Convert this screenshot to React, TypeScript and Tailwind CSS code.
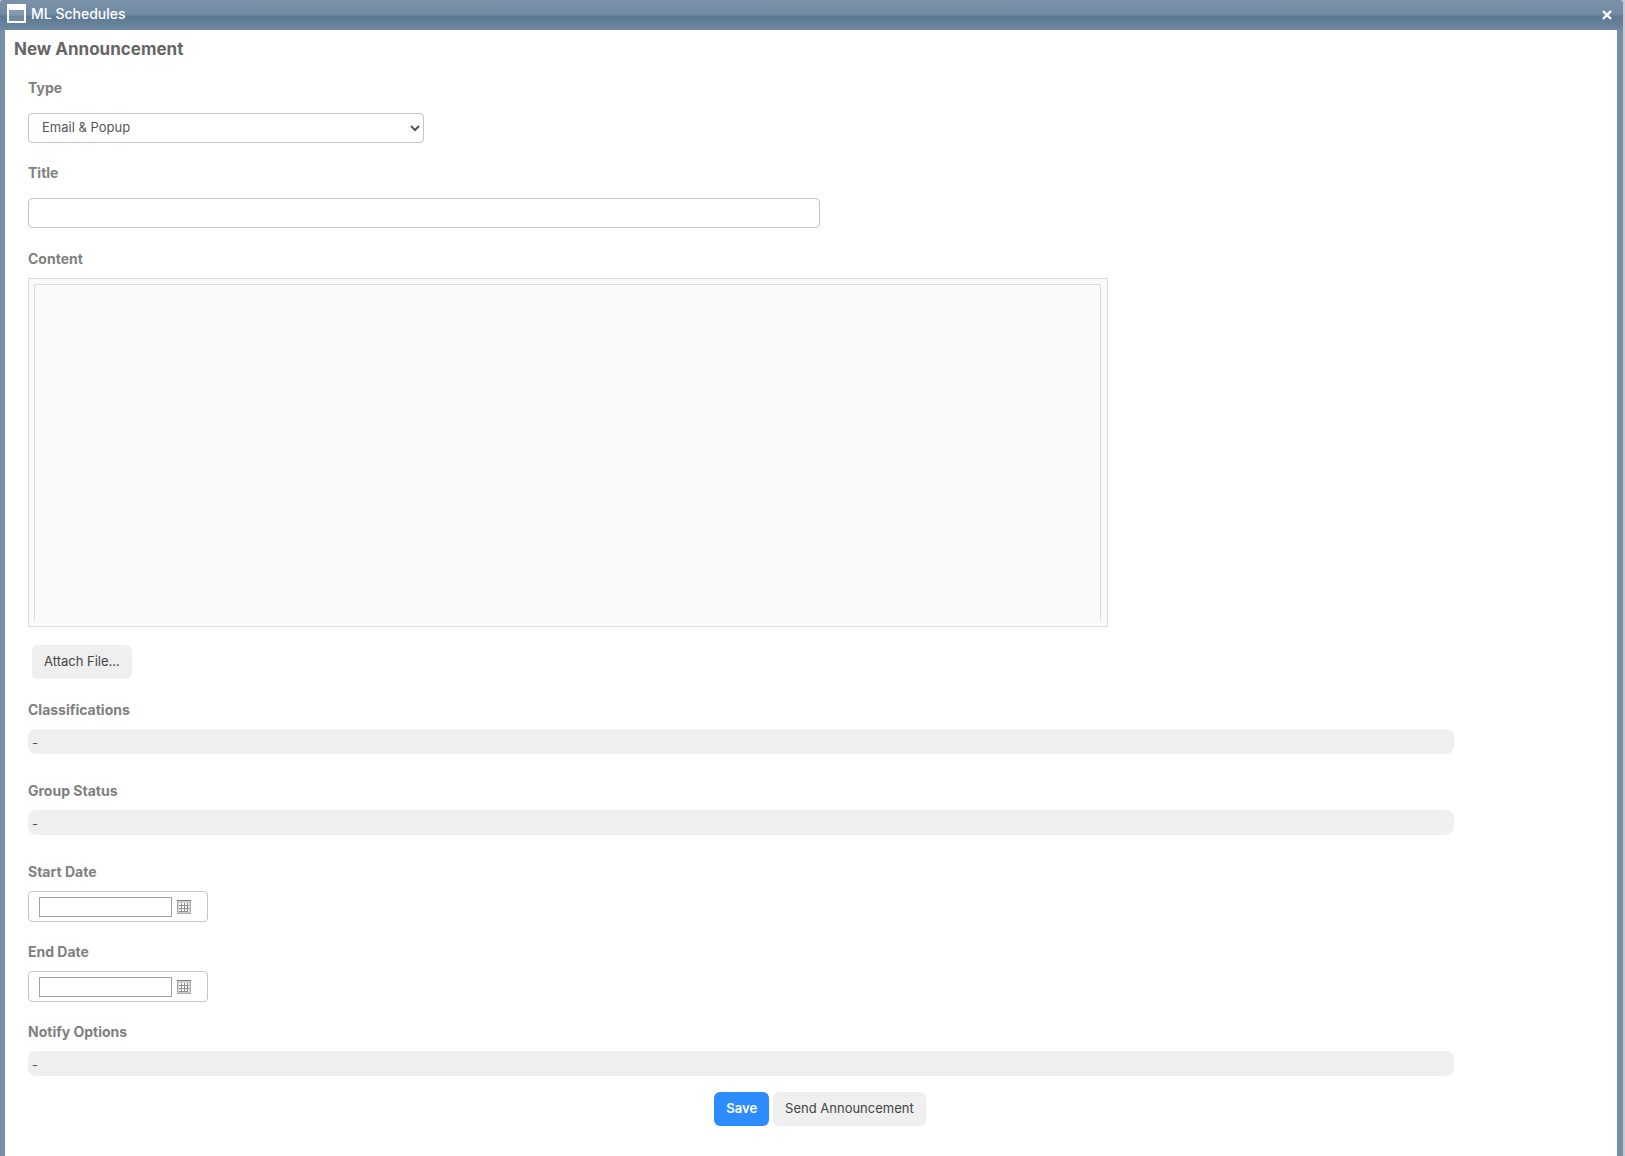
import React from "react";

function WindowIcon() {
  return (
    <svg width="19" height="19" viewBox="0 0 19 19" aria-hidden="true">
      <path fill="#fff" fillRule="evenodd" d="M0 0h19v19H0zM2 6h15v11H2z" />
      <path fill="#fff" fillOpacity="0.12" d="M2 6h15v11H2z" />
    </svg>
  );
}

function CloseIcon() {
  return (
    <svg width="10" height="10" viewBox="0 0 10 10" aria-hidden="true">
      <path d="M1 1l8 8M9 1l-8 8" stroke="#fff" strokeWidth="2.4" />
    </svg>
  );
}

function CalendarIcon() {
  return (
    <svg width="14" height="14" viewBox="0 0 14 14" aria-hidden="true">
      <path fill="#cfcfcf" d="M0 0h14v14H0z" />
      <path fill="#7d7d7d" d="M0 0h14v1H0z" />
      <path fill="#adadad" d="M0 1h1v13H0zM13 1h1v13h-1zM0 13h14v1H0z" />
      <path fill="#fff" d="M2 3h10v9H2z" />
      <path fill="#8f8f8f" d="M4 3h1v9H4zM7 3h1v9H7zM10 3h1v9h-1zM2 5h10v1H2zM2 8h10v1H2zM2 11h8v1H2z" />
    </svg>
  );
}

const labelClass = "block pt-px text-[14px] leading-5 font-bold text-[#808080]";

function Picker({ id, label }: { id: string; label: string }) {
  return (
    <div>
      <span id={id} className={labelClass}>{label}</span>
      <button
        type="button"
        aria-labelledby={id}
        className="mt-[9px] flex h-[25px] w-[90%] items-center rounded-lg bg-[#efefef] px-1 pt-1 text-left text-[13px] text-[#555]"
      >
        -
      </button>
    </div>
  );
}

function DateField({ id, label }: { id: string; label: string }) {
  return (
    <div>
      <label htmlFor={id} className={labelClass}>{label}</label>
      <div className="mt-[9px] flex h-[31px] w-[180px] items-center gap-[5px] rounded border border-[#c4c4c4] pt-px pl-2.5">
        <input id={id} type="text" className="h-5 w-[133px] border border-[#a0a0a0] px-1 text-[13px] outline-none" />
        <button type="button" aria-label={`Pick ${label}`}>
          <CalendarIcon />
        </button>
      </div>
    </div>
  );
}

export default function App() {
  return (
    <div className="min-h-screen bg-[#cdc7cd] pr-0.5 font-['Inter',sans-serif]">
      <div className="flex min-h-screen flex-col rounded-t bg-[#7590a7]">
        <header className="flex h-[30px] items-center justify-between rounded-t bg-[linear-gradient(to_bottom,#7a91a9_0px,#6f8ba3_15px,#5b7991_16px,#6d88a0_30px)] pr-[11px] pb-[3px] pl-[7px]">
          <div className="flex items-center gap-[5px]">
            <WindowIcon />
            <h1 className="text-[14px] leading-5 font-medium text-white">ML Schedules</h1>
          </div>
          <button type="button" aria-label="Close" className="pt-[3px]">
            <CloseIcon />
          </button>
        </header>

        <main className="mr-1.5 ml-[5px] flex-1 bg-white">
          <h2 className="pt-[7px] pl-[9px] text-[17px] leading-6 font-bold text-[#666]">New Announcement</h2>
          <form className="pt-4 pr-[5px] pb-[30px] pl-[23px]" onSubmit={(e) => e.preventDefault()}>
            <label htmlFor="type" className={labelClass}>Type</label>
            <select
              id="type"
              className="mt-[15px] block h-[30px] w-1/4 rounded border border-[#c4c4c4] bg-white pb-0.5 pl-[9px] text-[13px] text-[#555]"
            >
              <option>Email &amp; Popup</option>
            </select>

            <label htmlFor="title" className={`${labelClass} mt-[19px]`}>Title</label>
            <input
              id="title"
              type="text"
              className="mt-[15px] block h-[30px] w-1/2 rounded border border-[#c4c4c4] px-3 text-[13px] text-[#555] outline-none"
            />

            <label htmlFor="content" className={`${labelClass} mt-5`}>Content</label>
            <div className="mt-[9px] h-[349px] w-[1080px] max-w-full border border-[#dcdcdc] bg-[#fafafa] py-[5px] pr-1.5 pl-[5px]">
              <textarea
                id="content"
                className="block h-full w-full resize-none border border-b-0 border-[#dcdcdc] bg-[#fafafa] p-2 text-[13px] outline-none"
              />
            </div>

            <button
              type="button"
              className="mt-[18px] ml-1 block h-[34px] rounded-md bg-[#efefef] px-3 text-[13px] text-[#444]"
            >
              Attach File...
            </button>

            <div className="mt-5 flex flex-col gap-[26px]">
              <Picker id="classifications" label="Classifications" />
              <Picker id="group-status" label="Group Status" />
              <div className="flex flex-col gap-[19px]">
                <DateField id="start-date" label="Start Date" />
                <DateField id="end-date" label="End Date" />
                <Picker id="notify-options" label="Notify Options" />
              </div>
            </div>

            <div className="mt-4 flex justify-center gap-1">
              <button type="submit" className="h-[34px] rounded-md bg-[#2c8cff] px-3 text-[13px] font-semibold text-white">
                Save
              </button>
              <button type="button" className="h-[34px] rounded-md bg-[#efefef] px-3 text-[13px] text-[#444]">
                Send Announcement
              </button>
            </div>
          </form>
        </main>
      </div>
    </div>
  );
}
